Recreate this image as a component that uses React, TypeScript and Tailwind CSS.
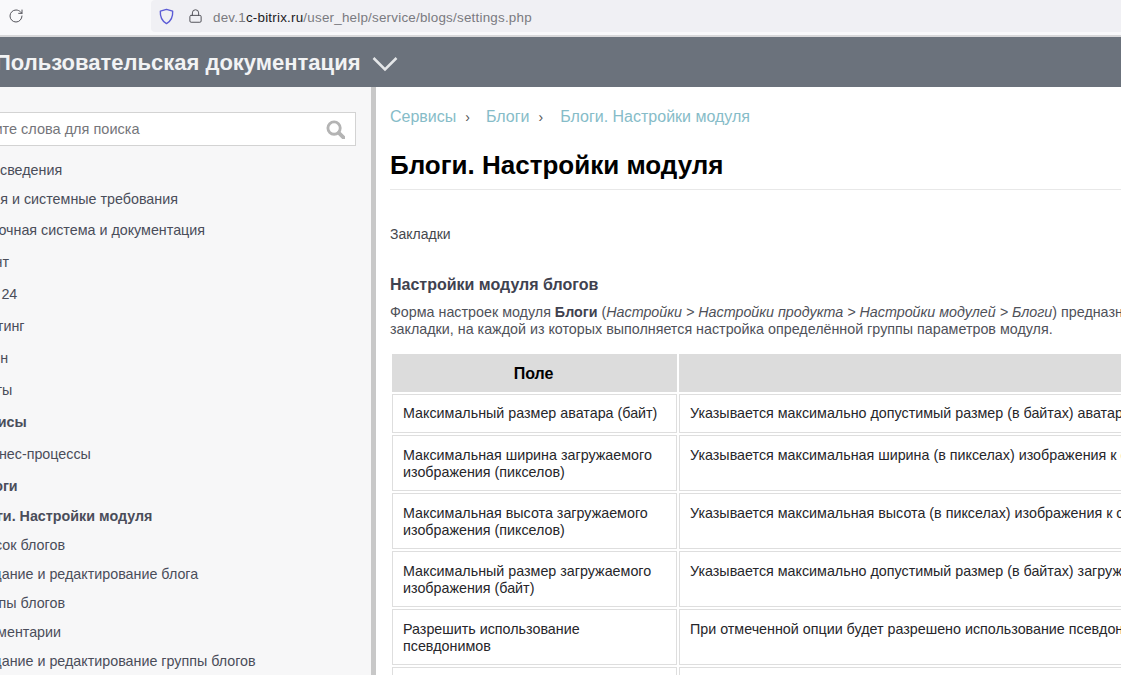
import type { ReactNode } from "react";
import { Lock, RotateCw } from "lucide-react";

const FONT = "font-['Liberation_Sans',Arial,sans-serif]";

const sidebarItems = [
  { label: "Общие сведения", className: "h-[28px] ml-[-51px]" },
  { label: "Инсталляция и системные требования", className: "h-[30px] ml-[-80px]" },
  { label: "Справочная система и документация", className: "h-[32px] ml-[-43px]" },
  { label: "Контент", className: "h-[32px] ml-[-44px]" },
  { label: "Битрикс 24", className: "h-[32px] ml-[-56px]" },
  { label: "Маркетинг", className: "h-[32px] ml-[-45px]" },
  { label: "Дизайн", className: "h-[32px] ml-[-40px]" },
  { label: "Сайты", className: "h-[32px] ml-[-31px]" },
  { label: "Сервисы", className: "h-[32px] ml-[-38px] font-bold" },
  { label: "Бизнес-процессы", className: "h-[32px] ml-[-25px]" },
  { label: "Блоги", className: "h-[31px] ml-[-25px] font-bold" },
  { label: "Блоги. Настройки модуля", className: "h-[29px] ml-[-31px] font-bold" },
  { label: "Список блогов", className: "h-[29px] ml-[-31px]" },
  { label: "Создание и редактирование блога", className: "h-[29px] ml-[-31px]" },
  { label: "Группы блогов", className: "h-[29px] ml-[-31px]" },
  { label: "Комментарии", className: "h-[29px] ml-[-29px]" },
  { label: "Создание и редактирование группы блогов", className: "h-[29px] ml-[-31px]" },
];

const rows: { field: ReactNode; text: string; height: string; pad: string }[] = [
  {
    field: "Максимальный размер аватара (байт)",
    text: "Указывается максимально допустимый размер (в байтах) аватара пользователя блога.",
    height: "h-[39px]",
    pad: "pt-[10px]",
  },
  {
    field: "Максимальная ширина загружаемого изображения (пикселов)",
    text: "Указывается максимальная ширина (в пикселах) изображения к сообщению блога.",
    height: "h-[56px]",
    pad: "pt-[11px]",
  },
  {
    field: "Максимальная высота загружаемого изображения (пикселов)",
    text: "Указывается максимальная высота (в пикселах) изображения к сообщению блога.",
    height: "h-[56px]",
    pad: "pt-[11px]",
  },
  {
    field: "Максимальный размер загружаемого изображения (байт)",
    text: "Указывается максимально допустимый размер (в байтах) загружаемого изображения.",
    height: "h-[56px]",
    pad: "pt-[11px]",
  },
  {
    field: (
      <>
        Разрешить использование
        <br />
        псевдонимов
      </>
    ),
    text: "При отмеченной опции будет разрешено использование псевдонимов в блогах.",
    height: "h-[56px]",
    pad: "pt-[11px]",
  },
  { field: "", text: "", height: "h-[56px]", pad: "pt-[11px]" },
];

function Toolbar() {
  return (
    <div className="flex h-[37px] shrink-0 items-start border-b-2 border-[#d8d8da] bg-[#f9f9fb]">
      <div className="flex h-[32px] w-[151px] shrink-0 items-center pl-[8px]">
        <RotateCw className="h-[16px] w-[16px] text-[#55555c]" strokeWidth={1.5} />
      </div>
      <div className="flex h-[32px] flex-1 items-center rounded-l-[4px] bg-[#f0f0f4] pl-[7px]">
        <svg viewBox="0 0 16 16" className="h-[17px] w-[17px]" fill="none">
          <path
            d="M8 1.3 13.8 3c.3 4.600-1.200 9-5.800 11.700C3.400 12 1.900 7.600 2.200 3L8 1.300Z"
            stroke="#5b5bd6"
            strokeWidth="1.300"
            strokeLinejoin="round"
          />
        </svg>
        <Lock className="ml-[13px] h-[16px] w-[15px] text-[#55555c]" strokeWidth={1.6} />
        <span className="ml-[10px] mt-[4px] text-[13.4px] tracking-[0.22px] text-[#7a7a80]">
          dev.1<span className="text-[#1b1b1f]">c-bitrix.ru</span>/user_help/service/blogs/settings.php
        </span>
      </div>
    </div>
  );
}

function Header() {
  return (
    <div className="flex h-[50px] shrink-0 items-center overflow-hidden bg-[#6b727c]">
      <span className="ml-[-5px] whitespace-nowrap text-[22px] font-bold text-[#f2f3f4]">
        Пользовательская документация
      </span>
      <svg viewBox="0 0 26 16" className="ml-[11px] mt-[4px] h-[16px] w-[26px]" fill="none">
        <path d="M1.500 2 13 13.500 24.500 2" stroke="#e4e6e8" strokeWidth="2.500" />
      </svg>
    </div>
  );
}

function Sidebar() {
  return (
    <aside className="flex w-[376px] shrink-0 flex-col overflow-hidden border-r-[5px] border-[#c8c8c8] bg-[#f7f7f8]">
      <div className="ml-[-20px] mt-[25px] flex h-[34px] w-[376px] shrink-0 items-center border border-[#d3d3d3] bg-white pl-[18px] pr-[10px]">
        <span className="mt-[2px] flex-1 whitespace-nowrap text-[14.5px] text-[#75757a]">
          <span className="ml-[-38px]">Введите слова для поиска</span>
        </span>
        <svg viewBox="0 0 20 20" className="h-[19px] w-[19px]" fill="none" stroke="#b4b4b4">
          <circle cx="8.500" cy="8.500" r="6.500" strokeWidth="3" />
          <path d="M13.500 13.500 18.500 18.500" strokeWidth="4" strokeLinecap="round" />
        </svg>
      </div>
      <nav className="mt-[11px] flex flex-col text-[14.3px] text-[#4a4d5a]">
        {sidebarItems.map((item) => (
          <div
            key={item.label}
            className={`flex shrink-0 items-center whitespace-nowrap ${item.className}`}
          >
            {item.label}
          </div>
        ))}
      </nav>
    </aside>
  );
}

function Content() {
  return (
    <main className="flex-1 overflow-hidden bg-white pl-[14px]">
      <div className="mt-[18px] flex h-[24px] items-center whitespace-nowrap text-[16px] text-[#86bcc8]">
        <span>Сервисы</span>
        <span className="ml-[9px] text-[14px] text-[#555]">›</span>
        <span className="ml-[16px]">Блоги</span>
        <span className="ml-[9px] text-[14px] text-[#555]">›</span>
        <span className="ml-[17px]">Блоги. Настройки модуля</span>
      </div>
      <h1 className="mt-[18px] h-[43px] border-b border-[#e8e8e8] text-[26px] font-bold leading-[36px] text-black">
        Блоги. Настройки модуля
      </h1>
      <p className="mt-[34px] text-[14px] leading-[20px] text-[#45474d]">Закладки</p>
      <h2 className="mt-[31px] text-[16px] font-bold leading-[20px] text-[#3f424f]">
        Настройки модуля блогов
      </h2>
      <p className="mt-[9px] whitespace-nowrap text-[14.3px] leading-[17px] text-[#4f5159]">
        Форма настроек модуля <b className="text-[#3f424f]">Блоги</b> (
        <i>Настройки &gt; Настройки продукта &gt; Настройки модулей &gt; Блоги</i>) предназначена для настройки модуля. Содержит
        <br />
        закладки, на каждой из которых выполняется настройка определённой группы параметров модуля.
      </p>
      <table className="mt-[14px] w-[1000px] table-fixed border-separate border-spacing-[2px] text-[14.3px] leading-[17px] text-[#26262a]">
        <colgroup>
          <col className="w-[285px]" />
          <col />
        </colgroup>
        <thead>
          <tr className="h-[38px]">
            <th className="bg-[#dcdcdc] pr-[2px] text-center text-[16px] font-bold text-black">Поле</th>
            <th className="bg-[#dcdcdc]" />
          </tr>
        </thead>
        <tbody>
          {rows.map((row, i) => (
            <tr key={i} className={row.height}>
              <td className="border border-[#dedede] px-[10px] align-top">
                <div className={row.pad}>{row.field}</div>
              </td>
              <td className="whitespace-nowrap border border-[#dedede] px-[10px] align-top">
                <div className={row.pad}>{row.text}</div>
              </td>
            </tr>
          ))}
        </tbody>
      </table>
    </main>
  );
}

export default function App() {
  return (
    <div className={`flex h-[675px] w-[1121px] flex-col overflow-hidden bg-white ${FONT}`}>
      <Toolbar />
      <Header />
      <div className="flex min-h-0 flex-1">
        <Sidebar />
        <Content />
      </div>
    </div>
  );
}
